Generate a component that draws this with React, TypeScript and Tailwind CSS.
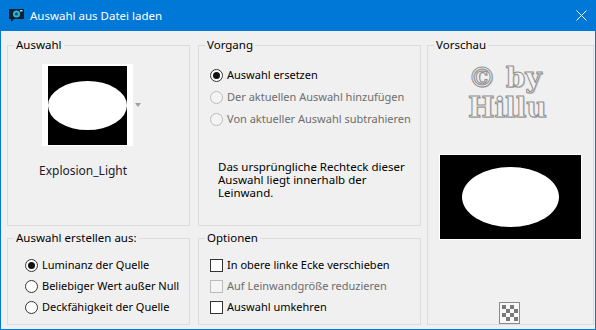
import type { ReactNode } from "react"

const font = { fontFamily: '"Noto Sans", "Liberation Sans", sans-serif' }

function Group({ title, className, children }: { title: string; className?: string; children: ReactNode }) {
  return (
    <fieldset className={`border border-[#dcdcdc] ${className ?? ""}`}>
      <legend className="ml-[6px] whitespace-nowrap px-[2px] text-[11.5px] leading-[16px] text-black">{title}</legend>
      {children}
    </fieldset>
  )
}

function Radio({ label, checked, disabled }: { label: string; checked?: boolean; disabled?: boolean }) {
  return (
    <div className="flex h-[21px] items-center gap-[4px] whitespace-nowrap">
      <span
        className={`flex h-[13px] w-[13px] shrink-0 items-center justify-center rounded-full border ${
          disabled ? "border-[#bcbcbc] bg-[#f4f4f4]" : "border-[#333] bg-white"
        }`}
      >
        {checked && <span className="h-[7px] w-[7px] rounded-full bg-[#111]" />}
      </span>
      <span className={`text-[11px] ${disabled ? "text-[#6d6d6d]" : "text-black"}`}>{label}</span>
    </div>
  )
}

function Check({ label, disabled }: { label: string; disabled?: boolean }) {
  return (
    <div className="flex h-[21px] items-center gap-[4px] whitespace-nowrap">
      <span
        className={`h-[13px] w-[13px] shrink-0 border ${
          disabled ? "border-[#bcbcbc] bg-[#f4f4f4]" : "border-[#333] bg-white"
        }`}
      />
      <span className={`text-[11px] ${disabled ? "text-[#6d6d6d]" : "text-black"}`}>{label}</span>
    </div>
  )
}

export default function App() {
  return (
    <div className="flex h-[330px] w-[596px] flex-col border-x border-b border-[#0078d7] bg-[#f0f0f0]" style={font}>
      {/* title bar */}
      <div className="-mx-px flex h-[31px] items-center bg-[#0078d7] pl-[8px] pr-[5px] text-white">
        <svg width="17" height="17" viewBox="0 0 17 17">
          <path d="M1 2h15v10H6l-3 3v-3H1z" fill="#12202e" />
          <circle cx="8.5" cy="7" r="3.6" fill="#2fb4d6" />
          <circle cx="8.5" cy="7" r="1.6" fill="#0e4f6b" />
          <rect x="12" y="3" width="2.5" height="1.5" fill="#9fe3f2" />
        </svg>
        <span className="ml-[5px] text-[11.5px]">Auswahl aus Datei laden</span>
        <svg className="ml-auto mr-[4px]" width="11" height="11" viewBox="0 0 11 11">
          <path d="M0.5 0.5l10 10M10.5 0.5l-10 10" stroke="white" strokeWidth="1" />
        </svg>
      </div>

      <div className="flex pl-[6px] pt-[6px]">
        {/* left column */}
        <div className="flex w-[183px] shrink-0 flex-col gap-[4px]">
          <Group title="Auswahl" className="h-[189px]">
            <div className="pl-[34px] pt-[11px]">
              <div className="flex items-center">
                <div className="h-[82px] w-[91px] bg-white pl-[6px] pt-[2px]">
                  <div className="flex h-[79px] w-[79px] items-center justify-center bg-black">
                    <div className="h-[49px] w-[79px] rounded-[50%] bg-white" />
                  </div>
                </div>
                <svg className="ml-[2px]" width="6" height="4" viewBox="0 0 6 4">
                  <path d="M0 0h6L3 4z" fill="#a0a0a0" />
                </svg>
              </div>
              <div className="-ml-[3px] mt-[16px] text-[12px] text-[#1a1a2e]">Explosion_Light</div>
            </div>
          </Group>
          <Group title="Auswahl erstellen aus:" className="h-[95px]">
            <div className="pl-[17px] pt-[9px]">
              <Radio label="Luminanz der Quelle" checked />
              <Radio label="Beliebiger Wert außer Null" />
              <Radio label="Deckfähigkeit der Quelle" />
            </div>
          </Group>
        </div>

        {/* middle column */}
        <div className="ml-[8px] flex w-[223px] shrink-0 flex-col gap-[4px]">
          <Group title="Vorgang" className="h-[189px]">
            <div className="pl-[11px] pt-[11px]">
              <div className="flex h-[22px] items-center">
                <Radio label="Auswahl ersetzen" checked />
              </div>
              <div className="flex h-[22px] items-center">
                <Radio label="Der aktuellen Auswahl hinzufügen" disabled />
              </div>
              <div className="flex h-[22px] items-center">
                <Radio label="Von aktueller Auswahl subtrahieren" disabled />
              </div>
              <p className="mt-[30px] whitespace-nowrap pl-[8px] text-[11.5px] leading-[13px] text-black">
                Das ursprüngliche Rechteck dieser
                <br />
                Auswahl liegt innerhalb der
                <br />
                Leinwand.
              </p>
            </div>
          </Group>
          <Group title="Optionen" className="h-[95px]">
            <div className="pl-[11px] pt-[9px]">
              <Check label="In obere linke Ecke verschieben" />
              <Check label="Auf Leinwandgröße reduzieren" disabled />
              <Check label="Auswahl umkehren" />
            </div>
          </Group>
        </div>

        {/* preview column */}
        <Group title="Vorschau" className="ml-[6px] flex h-[288px] w-[167px] shrink-0 flex-col">
          <div
            className="ml-[40px] mt-[10px] whitespace-nowrap text-[28px] font-bold leading-[30px] text-[#f2f2f2] [-webkit-text-stroke:1px_#8f8f8f] [text-shadow:1px_1px_0_#c8c8c8]"
            style={{ fontFamily: '"DejaVu Serif", "Liberation Serif", serif' }}
          >
            © by
            <br />
            Hillu
          </div>
          <div className="ml-[11px] mt-[31px] h-[86px] w-[143px] border border-white bg-black">
            <div className="flex h-full items-center justify-center">
              <div className="h-[60px] w-[97px] rounded-[50%] bg-white" />
            </div>
          </div>
          <div className="mt-[62px] flex justify-center pr-[2px]">
            <svg width="21" height="22" viewBox="0 0 21 22">
              <rect x="0.5" y="0.5" width="20" height="21" fill="#f8f8f8" stroke="#8a8a8a" />
              {[0, 1, 2, 3].map((r) =>
                [0, 1, 2, 3].map((c) =>
                  (r + c) % 2 === 0 ? (
                    <rect key={`${r}-${c}`} x={3 + c * 4} y={3 + r * 4} width="4" height="4" fill="#7a7a7a" />
                  ) : null,
                ),
              )}
            </svg>
          </div>
        </Group>
      </div>
    </div>
  )
}
